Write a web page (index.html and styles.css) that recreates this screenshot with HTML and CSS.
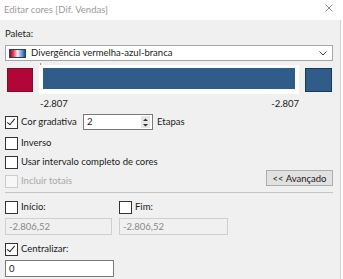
FILE: index.html
```html
<!DOCTYPE html>
<html lang="pt">
<head>
    <meta charset="UTF-8">
    <title>Editar cores</title>
    <link rel="stylesheet" href="styles.css">
</head>
<body>
    <div class="titlebar">
        <span class="title">Editar cores [Dif. Vendas]</span>
        <svg class="close" width="8" height="8" viewBox="0 0 8 8">
            <path d="M0.5 0.5 L7.5 7.5 M7.5 0.5 L0.5 7.5" stroke="#8c8c8c" stroke-width="1" fill="none"/>
        </svg>
    </div>

    <div class="panel">
        <div class="label">Paleta:</div>
        <div class="select">
            <span class="swatch"></span>
            <span class="select-text">Divergência vermelha-azul-branca</span>
            <svg class="chevron" width="8" height="5" viewBox="0 0 8 5">
                <path d="M0.5 0.5 L4 4 L7.5 0.5" stroke="#444" stroke-width="1" fill="none"/>
            </svg>
        </div>

        <!-- Colour preview -->
        <div class="colors">
            <span class="square red"></span>
            <div class="bar-frame"><div class="bar"></div></div>
            <span class="square blue"></span>
        </div>
        <div class="ticks">
            <span>-2.807</span>
            <span>-2.807</span>
        </div>

        <div class="row steps">
            <label class="check check-wide"><span class="box checked"></span>Cor gradativa</label>
            <div class="spin">
                <span>2</span>
                <span class="spin-btn">
                    <svg width="7" height="11" viewBox="0 0 7 11">
                        <path d="M1 4 L3.5 1.5 L6 4 Z M1 7 L3.5 9.5 L6 7 Z" fill="#333"/>
                    </svg>
                </span>
            </div>
            <span class="etapas">Etapas</span>
        </div>

        <label class="check row-inverso"><span class="box"></span>Inverso</label>
        <label class="check row-usar"><span class="box"></span>Usar intervalo completo de cores</label>

        <div class="row totals">
            <label class="check disabled"><span class="box"></span>Incluir totais</label>
            <button class="advanced">&lt;&lt; Avançado</button>
        </div>

        <hr class="separator">

        <div class="range">
            <label class="check"><span class="box"></span>Início:</label>
            <label class="check"><span class="box"></span>Fim:</label>
            <div class="input disabled">-2.806,52</div>
            <div class="input disabled">-2.806,52</div>
        </div>

        <label class="check row-center"><span class="box checked"></span>Centralizar:</label>
        <div class="input center-input">0</div>
    </div>
</body>
</html>
```

FILE: styles.css
```css
body {
    margin: 0;
    width: 343px;
    height: 279px;
    overflow: hidden;
    background: #fbfbfb;
    font-family: 'Lato', 'Noto Sans', sans-serif;
    font-size: 9.5px;
    color: #1a1a1a;
    white-space: nowrap;
}

/* Title bar */
.titlebar {
    height: 20px;
    background: #fff;
    display: flex;
    align-items: center;
    justify-content: space-between;
    padding: 0 10px 0 4px;
}

.title {
    color: #9a9a9a;
    line-height: 14px;
}

.close {
    margin-top: -4px;
}

/* Dialog body */
.panel {
    width: 328px;
    height: 259px;
    background: #f0f0f0;
    border-right: 1px solid #d6d6d6;
    padding: 7px 7px 0 5px;
    box-sizing: content-box;
}

.label {
    line-height: 14px;
}

.select {
    margin-top: 4px;
    height: 14px;
    background: #fff;
    border: 1px solid #a6a6a6;
    display: flex;
    align-items: center;
    padding: 0 5px 0 3px;
}

.swatch {
    width: 17px;
    height: 9px;
    border: 1px solid #2a3d66;
    box-sizing: border-box;
    background: linear-gradient(90deg, #8c0a2c, #e84a5a 25%, #f8f0f0 50%, #7aa6d8 75%, #1e4e9c);
}

.select-text {
    margin-left: 5px;
    flex: 1;
    line-height: 14px;
}

/* Colour preview */
.colors {
    margin-top: 4px;
    height: 29px;
    display: flex;
    align-items: center;
    gap: 6px;
    padding-left: 2px;
}

.square {
    width: 26px;
    height: 24px;
    box-sizing: border-box;
}

.square.red {
    background: #b20538;
    border: 1px solid #7a1030;
}

.square.blue {
    width: 27px;
    background: #305c8a;
    border: 1px solid #1d3654;
}

.bar-frame {
    position: relative;
    width: 260px;
    height: 29px;
    background: #fff;
    padding: 3px 4px 5px;
    box-sizing: border-box;
}

.bar-frame::before {
    content: "";
    position: absolute;
    left: 1px;
    top: -2px;
    width: 1px;
    height: 2px;
    background: #9a9a9a;
}

.bar {
    height: 100%;
    background: #305c8a;
}

.ticks {
    margin: 3px 0 0 35px;
    width: 259px;
    display: flex;
    justify-content: space-between;
    line-height: 14px;
}

/* Checkboxes */
.check {
    display: flex;
    align-items: center;
    line-height: 14px;
    height: 14px;
}

.box {
    flex: none;
    width: 13px;
    height: 13px;
    box-sizing: border-box;
    border: 1px solid #333;
    background: #fff;
    margin-right: 3px;
    position: relative;
}

.box.checked::after {
    content: "";
    position: absolute;
    left: 3px;
    top: 0px;
    width: 3px;
    height: 7px;
    border: solid #222;
    border-width: 0 1px 1px 0;
    transform: rotate(40deg);
}

.check.disabled {
    color: #a8a8a8;
}

.check.disabled .box {
    border-color: #cccccc;
    background: #f7f7f7;
}

.row {
    display: flex;
}

.steps {
    margin-top: 3px;
    align-items: center;
    height: 16px;
}

.check-wide {
    width: 78px;
}

.spin {
    width: 70px;
    height: 16px;
    box-sizing: border-box;
    background: #fff;
    border: 1px solid #7a7a7a;
    display: flex;
    align-items: center;
    justify-content: space-between;
    padding: 0 2px 0 3px;
    line-height: 14px;
}

.spin-btn {
    display: flex;
    width: 9px;
    height: 12px;
    background: #e6e6e6;
    justify-content: center;
    align-items: center;
}

.etapas {
    margin-left: 4px;
    line-height: 14px;
}

.row-inverso {
    margin-top: 6px;
}

.row-usar {
    margin-top: 5px;
}

.totals {
    margin-top: 1px;
    height: 18px;
    justify-content: space-between;
    align-items: flex-start;
}

.totals .check {
    margin-top: 4px;
}

.advanced {
    width: 67px;
    height: 16px;
    padding: 0;
    font: inherit;
    color: #1a1a1a;
    background: #e1e1e1;
    border: 1px solid #adadad;
}

.separator {
    margin: 4px 0 0;
    border: none;
    border-top: 1px solid #c4c4c4;
}

/* Início / Fim */
.range {
    margin-top: 7px;
    display: grid;
    grid-template-columns: 107px 109px;
    column-gap: 7px;
    row-gap: 4px;
}

.input {
    height: 17px;
    box-sizing: border-box;
    border: 1px solid #7a7a7a;
    background: #fff;
    padding-left: 3px;
    line-height: 15px;
}

.input.disabled {
    background: #f0f0f0;
    border-color: #cfcfcf;
    color: #8a8a8a;
}

.row-center {
    margin-top: 7px;
}

.center-input {
    margin-top: 4px;
    width: 109px;
}
```
